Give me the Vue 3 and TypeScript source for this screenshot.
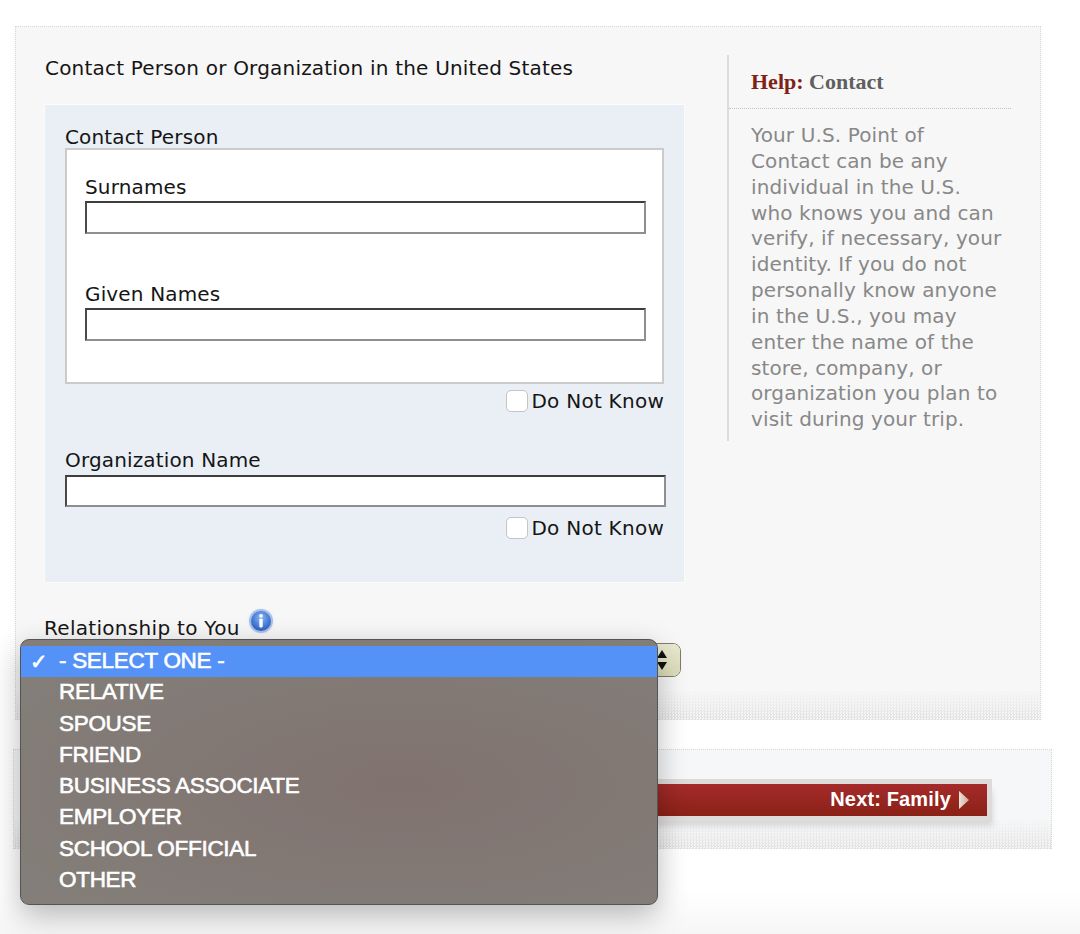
<script setup lang="ts">
const helpLines: string[] = [
  'Your U.S. Point of', 'Contact can be any', 'individual in the U.S.', 'who knows you and can',
  'verify, if necessary, your', 'identity. If you do not', 'personally know anyone', 'in the U.S., you may',
  'enter the name of the', 'store, company, or', 'organization you plan to', 'visit during your trip.'
]
const options: string[] = ['RELATIVE', 'SPOUSE', 'FRIEND', 'BUSINESS ASSOCIATE', 'EMPLOYER', 'SCHOOL OFFICIAL', 'OTHER']
</script>

<template>
  <div class="page">
    <section class="panel">
      <div class="content">
        <div class="title">Contact Person or Organization in the United States</div>
        <div class="blue">
          <div class="label first">Contact Person</div>
          <div class="white">
            <div class="label">Surnames</div>
            <div class="input"></div>
            <div class="label second">Given Names</div>
            <div class="input"></div>
          </div>
          <div class="dnk dnk1"><span class="check"></span><span>Do Not Know</span></div>
          <div class="label org">Organization Name</div>
          <div class="input wide"></div>
          <div class="dnk dnk2"><span class="check"></span><span>Do Not Know</span></div>
        </div>
        <div class="rel">
          <span>Relationship to You</span>
          <svg class="info" width="28" height="28" viewBox="0 0 28 28">
            <defs>
              <radialGradient id="ib" cx="50%" cy="35%" r="65%">
                <stop offset="0%" stop-color="#8db8f4" />
                <stop offset="60%" stop-color="#4a80dc" />
                <stop offset="100%" stop-color="#2f5db8" />
              </radialGradient>
            </defs>
            <circle cx="14" cy="14" r="13.5" fill="#edf1f8" />
            <circle cx="14" cy="14" r="12" fill="#a9bfe4" />
            <circle cx="14" cy="14" r="10" fill="url(#ib)" />
            <circle cx="14" cy="8.8" r="1.9" fill="#fff" />
            <rect x="12.3" y="11.8" width="3.4" height="8.6" rx="0.8" fill="#fff" />
          </svg>
        </div>
        <div class="select">
          <span class="sel-btn">
            <svg width="12" height="22" viewBox="0 0 12 22">
              <path d="M6 1 L11 9 L1 9 Z M1 13 L11 13 L6 21 Z" fill="#111" />
            </svg>
          </span>
        </div>
      </div>
      <aside class="help">
        <div class="help-head"><b class="red">Help:</b> <b class="grey">Contact</b></div>
        <div class="help-body">
          <div v-for="line in helpLines" :key="line">{{ line }}</div>
        </div>
      </aside>
    </section>

    <section class="nav">
      <div class="next">
        <span>Next: Family</span>
        <svg width="12" height="20" viewBox="0 0 12 20">
          <defs>
            <linearGradient id="ar" x1="0" y1="0" x2="1" y2="0">
              <stop offset="0%" stop-color="#efe4d6" />
              <stop offset="100%" stop-color="#c9a898" />
            </linearGradient>
          </defs>
          <path d="M1 1 L11 10 L1 19 Z" fill="url(#ar)" />
        </svg>
      </div>
    </section>

    <div class="menu">
      <div class="opt on"><span class="tick">✓</span>- SELECT ONE -</div>
      <div v-for="o in options" :key="o" class="opt">{{ o }}</div>
    </div>
  </div>
</template>

<style>
html, body { margin: 0; background: #fff; }
</style>

<style scoped>
.page {
  position: relative;
  width: 1080px;
  height: 934px;
  overflow: hidden;
  box-sizing: border-box;
  padding-top: 26px;
  font-family: "DejaVu Sans", Verdana, sans-serif;
  font-size: 20px;
  letter-spacing: 0.15px;
  color: #151515;
  background: linear-gradient(#fff 890px, #f6f6f6 934px);
}
.panel {
  position: relative;
  box-sizing: border-box;
  width: 1026px;
  height: 694px;
  margin-left: 15px;
  padding: 28px 28px 0 29px;
  display: grid;
  grid-template-columns: 639px 284px;
  column-gap: 43px;
  align-items: start;
  background: #f7f7f7;
  border-top: 1px dotted #d8d8cc;
  border-left: 1px dotted #d8d8cc;
  border-right: 1px dotted #d8d8cc;
}
.panel::after, .nav::after {
  content: "";
  position: absolute;
  left: 0;
  right: 0;
  bottom: 0;
  height: 30px;
  background: repeating-conic-gradient(#e0e0e0 0 25%, #f4f4f4 0 50%) 0 0 / 3px 3px;
  -webkit-mask-image: linear-gradient(transparent, #000);
  mask-image: linear-gradient(transparent, #000);
}
.title {
  height: 24px;
  margin-top: 1px;
  line-height: 24px;
  letter-spacing: 0.2px;
}
.blue {
  box-sizing: border-box;
  position: relative;
  height: 477px;
  margin-top: 25px;
  padding: 20px 20px 0;
  background: #eaeff6;
  outline: 1px solid #fbfbfb;
}
.label { height: 24px; line-height: 24px; }
.first { height: 23px; }
.white {
  box-sizing: border-box;
  height: 236px;
  padding: 25px 16px 0 18px;
  background: #fff;
  border: 2px solid #cbcbcb;
}
.input {
  box-sizing: border-box;
  height: 33px;
  margin-top: 2px;
  background: #fff;
  border: 2px solid #8f8f8f;
  border-top-color: #3d3d3d;
  border-left-color: #4a4a4a;
}
.second { margin-top: 48px; }
.dnk {
  display: flex;
  justify-content: flex-end;
  align-items: center;
  gap: 3px;
  height: 24px;
  line-height: 24px;
  letter-spacing: 0.25px;
}
.dnk1 { margin-top: 5px; }
.dnk2 { margin-top: 9px; }
.check {
  box-sizing: border-box;
  width: 22px;
  height: 22px;
  background: #fff;
  border: 1px solid #c4c4c4;
  border-radius: 5px;
}
.org { margin-top: 35px; }
.input.wide { width: 601px; margin-top: 3px; height: 32px; }
.rel {
  display: flex;
  align-items: flex-start;
  gap: 7px;
  height: 24px;
  margin-top: 34px;
  margin-left: -1px;
  line-height: 24px;
  letter-spacing: 0.3px;
}
.info { margin-top: -9px; }
.select {
  box-sizing: border-box;
  display: flex;
  justify-content: flex-end;
  width: 636px;
  height: 34px;
  margin-top: 3px;
  background: #fff;
  border: 1px solid #7d7d6a;
  border-radius: 8px;
  overflow: hidden;
}
.sel-btn {
  width: 24px;
  display: flex;
  align-items: center;
  justify-content: flex-start;
  background: linear-gradient(#e9e9d2, #dcdcb8);
}
.help {
  box-sizing: border-box;
  height: 386px;
  border-left: 2px solid #dcdcdc;
}
.help-head {
  box-sizing: border-box;
  height: 54px;
  padding: 14px 0 0 22px;
  font-family: "Liberation Serif", "Times New Roman", serif;
  font-size: 22px;
  letter-spacing: 0;
  line-height: 26px;
  border-bottom: 1px dotted #c4c4b8;
}
.red { color: #7f2216; }
.grey { color: #5f5f5f; }
.help-body {
  padding: 14px 0 0 22px;
  line-height: 25.85px;
  letter-spacing: 0.12px;
  color: #888;
  white-space: nowrap;
}
.nav {
  position: relative;
  box-sizing: border-box;
  display: flex;
  justify-content: flex-end;
  width: 1039px;
  height: 100px;
  margin: 29px 0 0 13px;
  padding: 34px 64px 0 0;
  background: #f6f7f8;
  border-top: 1px dotted #d8d8cc;
  border-right: 1px dotted #d8d8cc;
  border-left: 1px dotted #d8d8cc;
}
.next {
  position: relative;
  z-index: 1;
  box-sizing: border-box;
  display: flex;
  align-items: center;
  justify-content: flex-end;
  gap: 7px;
  width: 400px;
  height: 32px;
  padding-right: 17px;
  background: linear-gradient(#a52b2b, #8a2116);
  box-shadow: 0 0 0 5px #dfdbda, 4px 8px 6px 2px rgba(0, 0, 0, 0.12);
  color: #fff;
  font-family: "Liberation Sans", Arial, sans-serif;
  font-weight: 700;
  font-size: 20px;
  letter-spacing: 0.15px;
}
.next span { margin-top: -1px; }
.menu {
  position: absolute;
  z-index: 5;
  left: 20px;
  top: 639px;
  box-sizing: border-box;
  width: 638px;
  height: 266px;
  padding-top: 6px;
  background: radial-gradient(ellipse at 60% 55%, #80726f, #837e79 85%);
  border: 1px solid #545454;
  border-radius: 9px;
  box-shadow: 0 10px 30px rgba(0, 0, 0, 0.28);
  font-family: "Liberation Sans", Arial, sans-serif;
  font-size: 22.5px;
  letter-spacing: -0.3px;
  color: #fff;
  -webkit-text-stroke: 0.6px #fff;
}
.opt {
  position: relative;
  height: 31.3px;
  line-height: 30px;
  padding-left: 38px;
}
.on { background: #5592f7; }
.tick {
  position: absolute;
  left: 9px;
  top: 1px;
  font-family: "DejaVu Sans", sans-serif;
  font-size: 21px;
  font-weight: 700;
}
</style>
